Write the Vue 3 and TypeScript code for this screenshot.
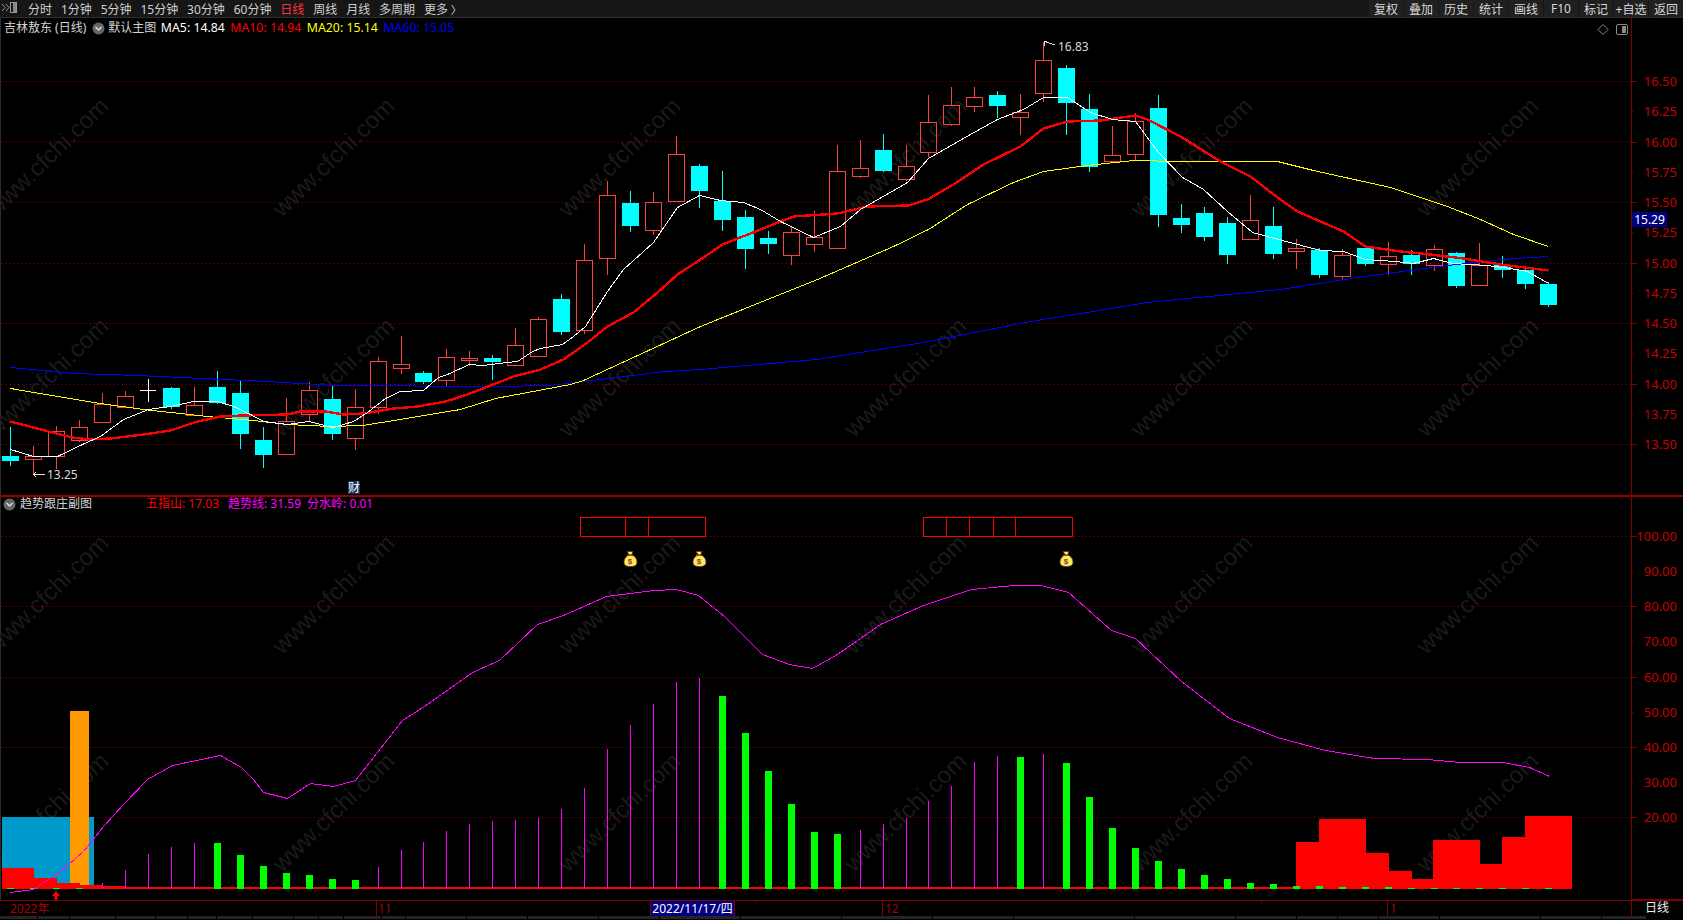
<script setup lang="ts">
type Candle = [number, number, number, number, number]
// [up, wickTop, bodyTop, bodyBottom, wickBottom]
const candles: Candle[] = [
  [0,428,457,462,467],[1,447,457,460,475],[1,427,432,457,470],[1,421,428,441,443],[1,394,405,423,423],
  [1,392,397,408,409],[2,380,391,391,403],[0,388,389,408,410],[1,388,406,416,417],[0,372,388,404,405],
  [0,381,394,435,450],[0,428,441,456,469],[1,399,422,455,456],[1,383,391,415,423],[0,387,400,435,441],
  [1,390,408,439,451],[1,358,362,408,415],[1,337,365,369,375],[0,372,374,383,385],[1,350,358,381,387],
  [1,352,359,361,367],[0,356,359,363,381],[1,329,346,366,366],[1,318,320,357,358],[0,295,300,333,336],
  [1,245,261,331,335],[1,182,196,259,276],[0,192,204,227,233],[1,193,203,231,236],[1,137,155,202,203],
  [0,165,167,192,209],[0,172,202,221,232],[0,211,218,250,270],[0,232,239,245,255],[1,228,233,256,266],
  [1,212,238,245,253],[1,146,172,249,249],[1,141,169,177,179],[0,135,151,172,173],[1,146,167,180,182],
  [1,96,123,153,158],[1,88,106,125,127],[1,88,98,107,113],[0,92,96,107,119],[1,95,113,118,136],
  [1,43,61,94,103],[0,66,69,104,136],[0,95,110,168,173],[1,127,156,162,163],[1,114,122,155,161],
  [0,96,109,216,228],[0,205,219,226,234],[0,208,214,238,242],[0,218,224,256,265],[1,196,221,240,240],
  [0,208,227,255,260],[1,240,249,252,270],[0,249,251,276,279],[1,250,256,277,280],[0,249,249,265,267],
  [1,243,257,265,276],[0,251,256,265,276],[1,246,250,266,272],[0,253,254,287,289],[1,244,266,286,286],
  [0,257,266,271,279],[0,270,271,285,290],[0,283,285,306,308],
]
const cx = (i: number) => Math.round(10.3 + 22.955 * i)
const candleViews = candles.map((c, i) => ({ up: c[0], x: cx(i), wt: c[1], bt: c[2], bb: c[3], wb: c[4] }))

const pts = (a: number[][]) => a.map((p) => `${p[0] + 0.5},${p[1] + 0.5}`).join(' ')
const ma5 = pts([[10,450],[33,457],[57,457],[82,445],[100,437],[123,420],[148,410],[170,407],[193,402],[217,402],[233,407],[250,415],[263,422],[287,425],[308,422],[333,428],[353,422],[367,413],[385,399],[400,392],[423,391],[438,378],[447,375],[469,365],[482,366],[507,363],[517,362],[532,352],[540,349],[562,345],[573,337],[585,327],[607,292],[623,270],[653,243],[677,208],[699,196],[720,201],[743,203],[760,210],[780,222],[813,238],[840,227],[860,210],[907,183],[928,159],[970,135],[997,120],[1023,110],[1043,98],[1067,98],[1090,113],[1112,120],[1135,122],[1158,153],[1182,178],[1203,190],[1227,212],[1252,233],[1282,241],[1320,251],[1343,252],[1365,260],[1395,262],[1413,264],[1433,259],[1452,264],[1487,266],[1510,269],[1527,272],[1548,284]])
const ma10 = pts([[10,422],[48,432],[72,438],[90,440],[110,439],[143,435],[170,431],[197,422],[220,417],[242,416],[287,415],[300,412],[325,412],[343,415],[363,414],[393,409],[417,407],[445,402],[467,395],[490,386],[513,377],[540,370],[563,360],[587,343],[607,327],[633,313],[657,293],[677,275],[700,260],[722,245],[760,230],[780,222],[793,217],[837,214],[867,207],[908,206],[927,200],[953,185],[983,165],[1020,147],[1043,129],[1067,122],[1100,121],[1135,116],[1147,120],[1180,137],[1220,162],[1250,177],[1277,198],[1297,212],[1343,232],[1365,247],[1400,252],[1430,255],[1463,259],[1500,265],[1548,271]])
const ma20 = pts([[10,389],[57,397],[100,404],[143,410],[207,417],[253,421],[287,425],[330,427],[362,426],[400,420],[460,410],[495,399],[570,385],[583,381],[700,327],[767,300],[817,280],[893,247],[928,230],[967,205],[1013,183],[1043,172],[1087,166],[1133,161],[1180,162],[1277,162],[1313,171],[1390,188],[1447,207],[1480,220],[1513,235],[1548,247]])
const ma60 = pts([[10,368],[73,374],[137,376],[267,382],[333,386],[500,387],[550,386],[665,372],[700,370],[816,360],[923,343],[1030,322],[1080,314],[1147,303],[1280,290],[1357,278],[1447,266],[1513,259],[1548,257]])
const trend = pts([[10,893],[33,890],[60,872],[83,852],[103,827],[123,805],[147,780],[172,766],[220,756],[241,768],[253,780],[263,793],[287,799],[310,784],[333,787],[355,781],[402,721],[424,707],[472,673],[499,661],[537,625],[563,616],[606,597],[653,591],[676,590],[698,596],[724,617],[762,655],[789,665],[812,669],[837,655],[880,625],[923,606],[971,590],[1014,586],[1041,586],[1068,593],[1111,631],[1135,639],[1181,682],[1229,719],[1277,738],[1325,751],[1374,759],[1427,760],[1460,763],[1503,763],[1529,768],[1549,777]])

const priceLabels = ['16.50','16.25','16.00','15.75','15.50','15.25','15.00','14.75','14.50','14.25','14.00','13.75','13.50']
  .map((t, i) => ({ t, y: 82 + i * 30.25, major: i % 2 === 0 }))
const subLabels = ['100.00','90.00','80.00','70.00','60.00','50.00','40.00','30.00','20.00']
  .map((t, i) => ({ t, y: 537 + i * 35.125, major: i % 2 === 0 }))

const wmX = [53, 339, 625, 911, 1197, 1483]
const mainMarks = [164, 384].flatMap((y) => wmX.map((x) => ({ x, y })))
const subMarks = [601, 819].flatMap((y) => wmX.map((x) => ({ x, y })))

const magentaBars: [number, number][] = [[4,884],[5,871],[6,855],[7,848],[8,844],[16,868],[17,851],[18,843],[19,832],[20,825],[21,822],[22,821],[23,819],[24,810],[25,789],[26,750],[27,726],[28,705],[29,683],[30,679],[37,831],[38,825],[39,819],[40,802],[41,787],[42,763],[43,757],[45,755]]
const greenBars: [number, number][] = [[0,889],[1,889],[2,889],[3,889],[9,844],[10,856],[11,867],[12,874],[13,876],[14,880],[15,881],[31,697],[32,734],[33,772],[34,805],[35,833],[36,835],[44,758],[46,764],[47,798],[48,829],[49,849],[50,862],[51,870],[52,876],[53,880],[54,884],[55,885],[56,887],[57,887],[58,888],[59,888],[60,888],[61,889],[62,889],[63,889],[64,889],[65,889],[66,889],[67,889]]
const redBlocks: [number, number, number][] = [[2,34,869],[34,57,879],[57,80,884],[80,103,886],[103,126,887],[1296,1319,843],[1319,1366,820],[1366,1389,854],[1389,1412,872],[1412,1433,880],[1433,1480,841],[1480,1502,865],[1502,1525,838],[1525,1572,817]]
const grid1 = [82, 142, 203, 264, 324, 385, 445]
const grid2 = [537, 607, 678, 748, 818]
const bags = [630, 699, 1066]
const box1 = [625, 648]
const box2 = [946, 969, 993, 1015]

const leftNav = ['分时','1分钟','5分钟','15分钟','30分钟','60分钟','日线','周线','月线','多周期','更多']
const rightNav = ['复权','叠加','历史','统计','画线','F10','标记','+自选','返回']
const stripCuts = [37, 31, 45, 39, 31, 28, 35, 40, 24, 24, 37, 23, 60, 60, 70, 60, 80, 100, 90, 80, 120, 100, 60, 40, 40, 60, 100, 60, 44]
</script>

<template>
  <div class="terminal">
    <header class="toolbar">
      <svg class="logo" width="17" height="14" viewBox="0 0 17 14">
        <path d="M1 3l3 3.500-3 3.500M5 3l3 3.500-3 3.500" fill="none" stroke="#999" />
        <rect x="9.500" y="1.500" width="6" height="10" fill="none" stroke="#999" />
        <rect x="12" y="2" width="3" height="9" fill="#888" />
      </svg>
      <nav class="nav-left">
        <span v-for="n in leftNav" :key="n" :class="{ active: n === '日线' }">{{ n }}</span>
        <span class="chev">〉</span>
      </nav>
      <nav class="nav-right">
        <span v-for="n in rightNav" :key="n" class="btn">{{ n }}</span>
      </nav>
    </header>

    <section class="pane pane-main">
      <svg class="canvas" width="1683" height="477" viewBox="0 19 1683 477">
        <line class="edge" x1="0.500" x2="0.500" y1="19" y2="496" />
        <text v-for="(m, i) in mainMarks" :key="i" class="mark" :x="m.x" :y="m.y" text-anchor="middle" :transform="`rotate(-44 ${m.x} ${m.y})`">www.cfchi.com</text>
        <line v-for="y in grid1" :key="y" class="dots" x1="2" x2="1631" :y1="y + 0.5" :y2="y + 0.5" />
        <g v-for="(c, i) in candleViews" :key="i">
          <template v-if="c.up === 0">
            <line class="wick-c" :x1="c.x + 0.5" :x2="c.x + 0.5" :y1="c.wt" :y2="c.wb" />
            <rect class="body-c" :x="c.x - 8" :y="c.bt" width="17" :height="c.bb - c.bt" />
          </template>
          <template v-else-if="c.up === 1">
            <line class="wick-r" :x1="c.x + 0.5" :x2="c.x + 0.5" :y1="c.wt" :y2="c.bt" />
            <line class="wick-r" :x1="c.x + 0.5" :x2="c.x + 0.5" :y1="c.bb" :y2="c.wb" />
            <rect class="body-r" :x="c.x - 7.5" :y="c.bt + 0.5" width="16" :height="c.bb - c.bt" />
          </template>
          <template v-else>
            <line class="wick-w" :x1="c.x + 0.5" :x2="c.x + 0.5" :y1="c.wt" :y2="c.wb" />
            <line class="wick-w" :x1="c.x - 8" :x2="c.x + 8" :y1="c.bt + 0.5" :y2="c.bt + 0.5" />
          </template>
        </g>
        <polyline class="l-blue" :points="ma60" />
        <polyline class="l-yellow" :points="ma20" />
        <polyline class="l-red" :points="ma10" />
        <polyline class="l-white" :points="ma5" />

        <path class="note-line" d="M33 475.500h12M33 475.500l3-2M33 475.500l3 2" />
        <text class="note" x="47" y="480">13.25</text>
        <path class="note-line" d="M1044 47V42.500h3M1046 43l9 3" />
        <text class="note" x="1058" y="52">16.83</text>

        <line class="axis" x1="1631.500" x2="1631.500" y1="19" y2="496" />
        <g v-for="p in priceLabels" :key="p.t">
          <line class="axis" x1="1631" :x2="p.major ? 1637 : 1633" :y1="p.y + 0.5" :y2="p.y + 0.5" />
          <text class="axis-label" x="1677" :y="p.y + 5" text-anchor="end">{{ p.t }}</text>
        </g>
        <path class="icon-line" d="M1603 25.500l5 5-5 5-5-5z" />
        <rect class="icon-line" x="1616.500" y="25.500" width="11" height="10" rx="1.500" />
        <rect x="1622" y="27" width="4" height="7" fill="#8a8a8a" />
      </svg>
      <div class="legend">
        <span class="stock">吉林敖东 (日线)</span>
        <svg class="round" width="13" height="13" viewBox="0 0 13 13"><circle cx="6.500" cy="6.500" r="6" fill="#666" /><path d="M3.500 5l3 3 3-3" fill="none" stroke="#ddd" stroke-width="1.500" /></svg>
        <span class="stock tpl">默认主图</span>
        <span class="c-white">MA5: 14.84</span>
        <span class="c-red">MA10: 14.94</span>
        <span class="c-yellow">MA20: 15.14</span>
        <span class="c-blue">MA60: 15.05</span>
      </div>
      <span class="cai">财</span>
      <span class="last-price">15.29</span>
    </section>

    <section class="pane pane-sub">
      <svg class="canvas" width="1683" height="404" viewBox="0 497 1683 404">
        <line class="edge" x1="0.500" x2="0.500" y1="497" y2="901" />
        <text v-for="(m, i) in subMarks" :key="i" class="mark" :x="m.x" :y="m.y" text-anchor="middle" :transform="`rotate(-44 ${m.x} ${m.y})`">www.cfchi.com</text>
        <line v-for="y in grid2" :key="y" class="dots" x1="2" x2="1631" :y1="y + 0.5" :y2="y + 0.5" />

        <rect x="2" y="818" width="92" height="72" fill="#0099cc" />
        <rect x="70" y="712" width="19" height="178" fill="#ff9900" />
        <rect v-for="(b, i) in redBlocks" :key="i" :x="b[0]" :y="b[2]" :width="b[1] - b[0]" :height="890 - b[2]" fill="#ff0000" />
        <rect x="2" y="888" width="1294" height="2" fill="#ff0000" />
        <rect v-for="b in magentaBars" :key="b[0]" :x="cx(b[0])" :y="b[1]" width="1" :height="890 - b[1]" fill="#ff00ff" />
        <rect v-for="b in greenBars" :key="b[0]" :x="cx(b[0]) - 3" :y="b[1]" width="7" :height="890 - b[1]" fill="#00ff00" />
        <polyline class="l-magenta" :points="trend" />
        <path d="M56 892l4 5h-2.500v4h-3v-4H52z" fill="#ff0000" />

        <g class="boxes">
          <rect x="580.500" y="518.500" width="125" height="19" />
          <line v-for="x in box1" :key="x" :x1="x + 0.5" :x2="x + 0.5" y1="518" y2="537" />
          <rect x="923.500" y="518.500" width="149" height="19" />
          <line v-for="x in box2" :key="x" :x1="x + 0.5" :x2="x + 0.5" y1="518" y2="537" />
        </g>
        <g v-for="x in bags" :key="x" :transform="`translate(${x} 560)`">
          <path d="M-3 -7.500h6l-1.500 3.500c3.500 1 5.500 4 5.500 7 0 3.500-2.500 4.500-6.500 4.500s-6.500-1-6.500-4.500c0-3 2-6 5.500-7z" fill="#ffe95c" stroke="#5a3a10" stroke-width="0.800" />
          <rect x="-3" y="-4.500" width="6" height="1.500" fill="#7a5a20" />
          <text class="dollar" x="0" y="5" text-anchor="middle">$</text>
        </g>

        <line class="axis" x1="1631.500" x2="1631.500" y1="497" y2="901" />
        <line class="axis" x1="1631" x2="1683" y1="900.500" y2="900.500" />
        <g v-for="p in subLabels" :key="p.t">
          <line class="axis" x1="1631" :x2="p.major ? 1637 : 1633" :y1="p.y + 0.5" :y2="p.y + 0.5" />
          <text class="axis-label" x="1677" :y="p.y + 5" text-anchor="end">{{ p.t }}</text>
        </g>
      </svg>
      <div class="sub-legend">
        <svg class="round" width="13" height="13" viewBox="0 0 13 13"><circle cx="6.500" cy="6.500" r="6" fill="#666" /><path d="M3.500 5l3 3 3-3" fill="none" stroke="#ddd" stroke-width="1.500" /></svg>
        <span class="stock title">趋势跟庄副图</span>
        <span class="c-red">五指山: 17.03</span>
        <span class="c-magenta shift">趋势线: 31.59</span>
        <span class="c-magenta">分水岭: 0.01</span>
      </div>
    </section>

    <footer class="timeline">
      <svg class="canvas" width="1683" height="16" viewBox="0 901 1683 16">
        <line class="axis" x1="0" x2="1683" y1="901.500" y2="901.500" />
        <text class="date-label" x="10" y="914">2022年</text>
        <line class="axis" x1="376.500" x2="376.500" y1="901" y2="917" />
        <text class="date-label" x="378" y="914">11</text>
        <line class="axis" x1="882.500" x2="882.500" y1="901" y2="917" />
        <text class="date-label" x="885" y="914">12</text>
        <line class="axis" x1="1387.500" x2="1387.500" y1="901" y2="917" />
        <text class="date-label" x="1390" y="914">1</text>
        <line class="axis" x1="756.500" x2="756.500" y1="901" y2="904" />
        <line class="axis" x1="1261.500" x2="1261.500" y1="901" y2="904" />
        <line class="axis" x1="1631.500" x2="1631.500" y1="901" y2="917" />
      </svg>
      <span class="cursor-date">2022/11/17/四</span>
      <span class="period">日线</span>
    </footer>
    <div class="strip">
      <i v-for="(w, i) in stripCuts" :key="i" :style="{ width: w + 'px' }"></i>
    </div>
  </div>
</template>

<style>
html, body { margin: 0; background: #000; }
</style>

<style scoped>
.terminal {
  width: 1683px;
  height: 920px;
  background: #000;
  display: flex;
  flex-direction: column;
  overflow: hidden;
  font-family: "Noto Sans", "Noto Sans CJK SC", sans-serif;
  font-size: 12px;
  color: #ddd;
}
.toolbar {
  height: 18px;
  flex: none;
  box-sizing: border-box;
  background: #161616;
  border-bottom: 1px solid #2e2e2e;
  display: flex;
  align-items: stretch;
}
.logo { flex: none; margin: 1px 0 0 1px; }
.nav-left {
  display: flex;
  align-items: center;
  gap: 8.9px;
  margin-left: 10px;
  white-space: nowrap;
  color: #d0d0d0;
}
.nav-left .active { color: #ff3232; }
.nav-left .chev { margin-left: -6px; font-size: 11px; }
.nav-right { margin-left: auto; display: flex; gap: 1px; }
.btn {
  width: 34px;
  background: #202020;
  display: flex;
  align-items: center;
  justify-content: center;
  white-space: nowrap;
  color: #d8d8d8;
}
.pane { position: relative; flex: none; }
.pane-main { box-sizing: border-box; border-bottom: 2px solid #9a0000; height: 479px; }
.pane-sub { height: 404px; margin-top: -1px; }
.canvas { position: absolute; left: 0; top: 0; display: block; }
.legend, .sub-legend {
  position: absolute;
  display: flex;
  align-items: center;
  white-space: nowrap;
  line-height: 16px;
}
.legend { left: 4px; top: 2px; gap: 5.5px; }
.legend .c-white, .legend .c-red, .legend .c-yellow, .legend .c-blue { font-size: 12.3px; }
.sub-legend { left: 3px; top: 0; gap: 6px; }
.stock { color: #d4d4d4; }
.round { flex: none; }
.tpl { margin-left: -2px; margin-right: -1px; }
.title { margin-left: -2px; margin-right: 48px; }
.shift { margin-left: 3px; }
.c-white { color: #fff; }
.c-red { color: #f00; }
.c-yellow { color: #ff0; }
.c-blue { color: #00f; }
.c-magenta { color: #f0f; }
.cai {
  position: absolute;
  left: 348px;
  top: 463px;
  width: 12px;
  height: 13px;
  line-height: 13px;
  font-size: 12px;
  text-align: center;
  background: #12305a;
  color: #fff;
}
.last-price {
  position: absolute;
  left: 1632px;
  top: 194px;
  width: 35px;
  height: 15px;
  line-height: 15px;
  text-align: center;
  background: #000080;
  color: #fff;
}
.timeline { position: relative; height: 16px; flex: none; }
.cursor-date {
  position: absolute;
  left: 650px;
  top: 1px;
  width: 85px;
  height: 15px;
  line-height: 15px;
  box-sizing: border-box;
  border: solid #800000;
  border-width: 0 1px;
  background: #000080;
  color: #fff;
  text-align: center;
  white-space: nowrap;
}
.period { position: absolute; left: 1645px; top: 0; line-height: 16px; color: #eee; }
.strip { flex: 1; display: flex; gap: 1px; }
.strip i { display: block; height: 3px; background: #242424; }

.edge { stroke: #2e2e2e; shape-rendering: crispEdges; }
.mark { font: 24px "Liberation Sans", sans-serif; fill: #1a1a1a; }
.dots { stroke: #9a0000; stroke-width: 1; stroke-dasharray: 1 3; shape-rendering: crispEdges; }
.wick-c { stroke: #00ffff; shape-rendering: crispEdges; }
.wick-r { stroke: #ff4040; shape-rendering: crispEdges; }
.wick-w { stroke: #fff; shape-rendering: crispEdges; }
.body-c { fill: #00ffff; shape-rendering: crispEdges; }
.body-r { fill: none; stroke: #ff4040; shape-rendering: crispEdges; }
polyline { fill: none; shape-rendering: crispEdges; }
.l-white { stroke: #fff; stroke-width: 1; }
.l-red { stroke: #ff0000; stroke-width: 2.400; }
.l-yellow { stroke: #ffff00; stroke-width: 1; }
.l-blue { stroke: #0000ff; stroke-width: 1; }
.l-magenta { stroke: #ff00ff; stroke-width: 1; }
.note { font: 12px "Noto Sans", sans-serif; fill: #d8d8d8; }
.note-line { fill: none; stroke: #e0e0e0; shape-rendering: crispEdges; }
.axis { stroke: #800000; stroke-width: 1; shape-rendering: crispEdges; }
.axis-label { font: 13px "Noto Sans", sans-serif; fill: #c40000; }
.date-label { font: 12px "Noto Sans", "Noto Sans CJK SC", sans-serif; fill: #a80000; }
.icon-line { fill: none; stroke: #8a8a8a; }
.boxes rect, .boxes line { fill: none; stroke: #ff0000; shape-rendering: crispEdges; }
.dollar { font: bold 8px "Liberation Sans", sans-serif; fill: #8a3a30; }
</style>
